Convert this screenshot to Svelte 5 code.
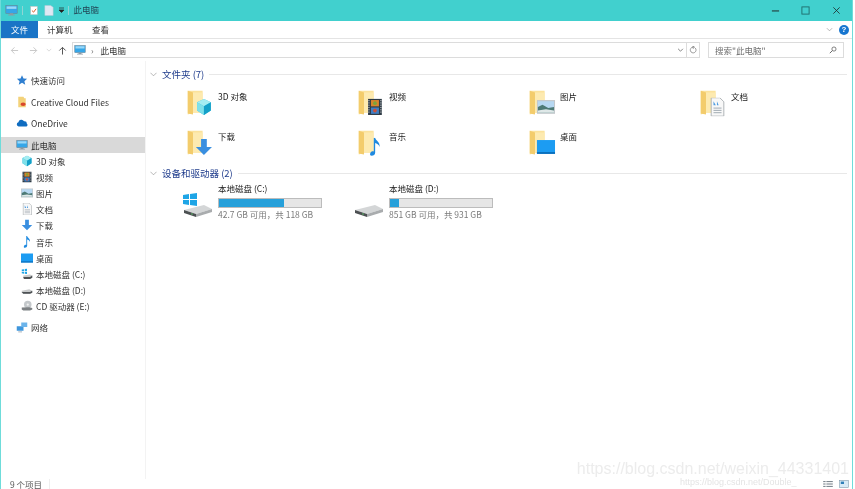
<script>
  // nav tree rows below the top level entries
  const pcChildren = [
    { icon: "cube", label: "3D 对象" },
    { icon: "film", label: "视频" },
    { icon: "photo", label: "图片" },
    { icon: "doc", label: "文档" },
    { icon: "down", label: "下载" },
    { icon: "note", label: "音乐" },
    { icon: "desk", label: "桌面" },
    { icon: "winDrive", label: "本地磁盘 (C:)" },
    { icon: "drive", label: "本地磁盘 (D:)" },
    { icon: "cd", label: "CD 驱动器 (E:)" },
  ];

  const folders = [
    { icon: "cube", label: "3D 对象" },
    { icon: "film", label: "视频" },
    { icon: "photo", label: "图片" },
    { icon: "doc", label: "文档" },
    { icon: "down", label: "下载" },
    { icon: "note", label: "音乐" },
    { icon: "desk", label: "桌面" },
  ];

  const drives = [
    { win: true, label: "本地磁盘 (C:)", used: 64, info: "42.7 GB 可用，共 118 GB" },
    { win: false, label: "本地磁盘 (D:)", used: 9, info: "851 GB 可用，共 931 GB" },
  ];
</script>

{#snippet glyph(name)}
  {#if name === "cube"}
    <path d="M8 1l6 3v7l-6 4-6-4V4z" fill="#3cc0dc" />
    <path d="M8 1l6 3-6 3.5L2 4z" fill="#a5edf2" />
    <path d="M2 4l6 3.5V15l-6-4z" fill="#7fe0ea" />
    <path d="M14 4v7l-6 4V7.500z" fill="#14a0c8" />
  {:else if name === "film"}
    <rect x="2" y="1" width="12" height="14" fill="#2d3a45" />
    <path d="M2.800 2v12M13.200 2v12" stroke="#e8e8e8" stroke-width=".8" stroke-dasharray="1 1" />
    <rect x="4.500" y="2" width="7" height="5.500" fill="#d8842c" />
    <rect x="4.500" y="8.500" width="7" height="5.500" fill="#3f7fc4" />
    <circle cx="8" cy="4.700" r="1.600" fill="#7ba53a" />
    <circle cx="8" cy="11.200" r="1.600" fill="#c9503c" />
  {:else if name === "photo"}
    <rect x="0" y="2" width="16" height="12" fill="#c3c8cc" />
    <rect x="1" y="3" width="14" height="10" fill="#b7d8f2" />
    <path d="M1 8l4-2 5 3 5-1v5H1z" fill="#4d7a76" />
    <path d="M1 11l7-1 7 1v2H1z" fill="#dfe8e8" />
  {:else if name === "doc"}
    <path d="M3 0h7.500L14 3.500V16H3z" fill="#f8f8f8" stroke="#a9aeb2" stroke-width=".8" />
    <path d="M5 3l2 3.500H5zM8 3l1.500 3.500H8z" fill="#4d9be0" />
    <path d="M5 9h7M5 11h7M5 13h7" stroke="#9aa5ad" stroke-width=".8" />
  {:else if name === "down"}
    <path d="M5.500 1h5v7H15l-7 7-7-7h4.500z" fill="#3a8fe0" />
  {:else if name === "note"}
    <path d="M7 0h1.200c.3 2.500 4.500 3.500 3.800 8-.5-2-2.500-3.200-3.800-3.400V13c0 1.500-1.500 2.700-3 2.700S3.500 14.500 4 13.300 5.800 11.500 7 12z" fill="#1f8ae0" />
  {:else if name === "desk"}
    <rect x="0" y="2" width="16" height="12" fill="#1c9cf2" />
    <rect x="0" y="12.500" width="16" height="1.500" fill="#0a6cb8" />
  {:else if name === "winDrive"}
    <path d="M1 2l3-.5V4H1zM5 1.300L8 1v3H5zM1 5h3v2.500L1 7zM5 5h3v3l-3-.4z" fill="#1ea5e6" />
    <path d="M3 10l9-1.500 3 1.500v3l-3 1.500H4l-1-1.500z" fill="#c8cacb" />
    <path d="M3 12l9 0 3-2v3l-3 1.500H4z" fill="#4e5254" />
  {:else if name === "drive"}
    <path d="M1 9l10-2 4 2v2.500l-3 1.500H3l-2-1.500z" fill="#c8cacb" />
    <path d="M1 10.500h11l3-1.500v2.500L12 13H3z" fill="#4e5254" />
  {:else if name === "cd"}
    <circle cx="9" cy="6" r="5" fill="#c4c8cb" />
    <circle cx="9" cy="6" r="1.500" fill="#f2f2f2" />
    <path d="M1 10l10-.5 4 1v2L12 14H3l-2-1.500z" fill="#7d8184" />
  {/if}
{/snippet}

{#snippet icon(name)}
  <svg class="nav-glyph" viewBox="0 0 16 16">{@render glyph(name)}</svg>
{/snippet}

{#snippet monitor(cls)}
  <svg class={cls} viewBox="0 0 16 16">
    <rect x="1" y="2" width="14" height="9.500" fill="#35a6e8" stroke="#6b8191" stroke-width=".7" />
    <rect x="2" y="3" width="12" height="3" fill="#9ad8f8" />
    <path d="M6 11.500h4v1.500h2v1H4v-1h2z" fill="#8d9aa4" />
  </svg>
{/snippet}

<div class="window">
  <header class="titlebar">
    {@render monitor("title-pc")}
    <i class="sep"></i>
    <svg class="qa" viewBox="0 0 12 12">
      <rect x="2" y="1" width="8" height="10" fill="#fff" stroke="#bbb" stroke-width=".6" />
      <path d="M3.500 6l2 2 3-4" fill="none" stroke="#d8602c" stroke-width="1.200" />
    </svg>
    <svg class="qa" viewBox="0 0 12 12">
      <path d="M1 0h7l3 2v10H1z" fill="#dfe8f4" stroke="#b8c4d2" stroke-width=".5" />
    </svg>
    <svg class="caret" viewBox="0 0 7 7">
      <path d="M1 1h5M1 3l2.500 2.500L6 3z" fill="#222" stroke="#222" stroke-width=".7" />
    </svg>
    <i class="sep"></i>
    <span class="title-text">此电脑</span>
    <div class="controls">
      <svg viewBox="0 0 10 10"><path d="M1 5.500h8" stroke="#1f2a2a" stroke-width="1.100" /></svg>
      <svg viewBox="0 0 10 10"><rect x="1" y="1" width="8" height="8" fill="none" stroke="#1f6a6a" stroke-width="1" /></svg>
      <svg viewBox="0 0 10 10"><path d="M1.500 1.500l7 7M8.500 1.500l-7 7" stroke="#1f2a2a" stroke-width=".9" /></svg>
    </div>
  </header>

  <nav class="ribbon">
    <span class="tab tab-file">文件</span>
    <span class="tab">计算机</span>
    <span class="tab">查看</span>
    <svg class="rib-chev" viewBox="0 0 8 5"><path d="M1 1l3 3 3-3" fill="none" stroke="#999" stroke-width=".8" /></svg>
    <span class="help">?</span>
  </nav>

  <div class="addr-row">
    <svg class="nav-arrow dim" viewBox="0 0 10 10"><path d="M9 5H1.500M5 1.500L1.500 5 5 8.500" fill="none" stroke="#c4c4c4" /></svg>
    <svg class="nav-arrow dim" viewBox="0 0 10 10"><path d="M1 5h7.500M5 1.500L8.500 5 5 8.500" fill="none" stroke="#c4c4c4" /></svg>
    <svg class="nav-mini" viewBox="0 0 8 5"><path d="M1 1l3 3 3-3" fill="none" stroke="#c4c4c4" stroke-width=".8" /></svg>
    <svg class="nav-arrow" viewBox="0 0 10 10"><path d="M5 9.500V1.500M1.500 5L5 1.500 8.500 5" fill="none" stroke="#555" stroke-width="1.100" /></svg>
    <div class="addr">
      {@render monitor("addr-pc")}
      <span class="crumb-sep">›</span>
      <span class="crumb">此电脑</span>
      <span class="addr-tail">
        <svg viewBox="0 0 8 5"><path d="M1 1l3 3 3-3" fill="none" stroke="#555" stroke-width=".9" /></svg>
      </span>
      <span class="addr-refresh">
        <svg viewBox="0 0 10 10"><path d="M7.800 2.500A3.600 3.600 0 1 1 5 1.400M5 0v3l2-1.500z" fill="none" stroke="#666" stroke-width=".8" /></svg>
      </span>
    </div>
    <div class="search">
      <span>搜索"此电脑"</span>
      <svg viewBox="0 0 10 10"><circle cx="6.200" cy="3.800" r="2.600" fill="none" stroke="#555" stroke-width=".9" /><path d="M4.300 5.700L1 9" stroke="#555" stroke-width="1.100" /></svg>
    </div>
  </div>

  <div class="body">
    <aside class="sidebar">
      <div class="top-row first">
        <svg class="nav-glyph" viewBox="0 0 16 16"><path d="M8 1.500l2 4.500 4.800.4-3.600 3.200 1.100 4.700L8 11.800l-4.300 2.500 1.100-4.700L1.200 6.400 6 6z" fill="#2f7fd0" /></svg>
        <span>快速访问</span>
      </div>
      <div class="top-row cc">
        <svg class="nav-glyph" viewBox="0 0 16 16">
          <path d="M3 1h7l1 2h2v12H3z" fill="#f3d27a" />
          <ellipse cx="9.500" cy="11" rx="3.500" ry="2.200" fill="#d9482c" />
        </svg>
        <span>Creative Cloud Files</span>
      </div>
      <div class="top-row od">
        <svg class="nav-glyph" viewBox="0 0 16 16"><path d="M3.500 12.500a2.800 2.800 0 0 1-.3-5.500 4 4 0 0 1 7.500-1.200 3.300 3.300 0 0 1 3.800 3.200A2 2 0 0 1 14 12.500z" fill="#0f6cc0" /></svg>
        <span>OneDrive</span>
      </div>
      <div class="top-row pc">
        {@render monitor("nav-glyph")}
        <span>此电脑</span>
      </div>
      {#each pcChildren as row}
        <div class="child-row">
          {@render icon(row.icon)}
          <span>{row.label}</span>
        </div>
      {/each}
      <div class="top-row net">
        <svg class="nav-glyph" viewBox="0 0 16 16">
          <rect x="1" y="7" width="9" height="6" fill="#3f96dc" />
          <rect x="7" y="2" width="8" height="6" fill="#6cb4ea" />
          <path d="M3 14.500h5" stroke="#8d9aa4" />
        </svg>
        <span>网络</span>
      </div>
    </aside>

    <main class="content">
      <div class="group-head">
        <svg viewBox="0 0 8 5"><path d="M.5.500L4 4 7.500.500" fill="none" stroke="#8a8a8a" stroke-width=".7" /></svg>
        <span>文件夹 (7)</span>
        <i></i>
      </div>
      <div class="folder-grid">
        {#each folders as f}
          <div class="folder">
            <svg class="folder-icon" viewBox="0 0 32 32">
              <path d="M2 2h17v25H8l-6 2z" fill="#fbe29c" />
              <path d="M2 2l6 2v25l-6-1z" fill="#f3cc6c" />
              <path d="M8 4h11v23H8z" fill="#fdeab0" />
              <svg x="10" y="10" width="21" height="21" viewBox="0 0 16 16">{@render glyph(f.icon)}</svg>
            </svg>
            <span>{f.label}</span>
          </div>
        {/each}
      </div>

      <div class="group-head second">
        <svg viewBox="0 0 8 5"><path d="M.5.500L4 4 7.500.500" fill="none" stroke="#8a8a8a" stroke-width=".7" /></svg>
        <span>设备和驱动器 (2)</span>
        <i></i>
      </div>
      <div class="drive-row">
        {#each drives as d}
          <div class="drive">
            <svg class="drive-icon" viewBox="0 0 30 24">
              {#if d.win}
                <path d="M0 2l6-1v5H0zM7 1l7-1v6H7zM0 7h6v5l-6-1zM7 7h7v6l-7-1z" fill="#1ea5e6" />
              {/if}
              <path d="M1 17l20-5 8 4-16 5z" fill="#d4d6d7" />
              <path d="M1 17l12 4v3L1 20z" fill="#4c5052" />
              <path d="M13 21l16-5v3l-16 5z" fill="#a9acae" />
              <circle cx="9" cy="21" r=".8" fill="#5ec46a" />
            </svg>
            <div class="drive-text">
              <div class="drive-name">{d.label}</div>
              <div class="bar"><div class="fill" style="width: {d.used}%"></div></div>
              <div class="drive-info">{d.info}</div>
            </div>
          </div>
        {/each}
      </div>
    </main>
  </div>

  <footer class="status">
    <span>9 个项目</span>
    <i></i>
    <div class="views">
      <svg viewBox="0 0 12 10"><path d="M0 2h3M4 2h8M0 5h3M4 5h8M0 8h3M4 8h8" stroke="#6b7680" stroke-width="1.200" /></svg>
      <svg class="view-on" viewBox="0 0 12 10"><rect x=".5" y=".5" width="11" height="9" fill="#d8eaf6" stroke="#7d97aa" stroke-width=".7" /><rect x="2" y="2" width="4" height="3" fill="#2f7fb8" /></svg>
    </div>
  </footer>

  <div class="mark-big">https://blog.csdn.net/weixin_44331401</div>
  <div class="mark-small">https://blog.csdn.net/Double_</div>
</div>

<style>
  :global(body) {
    margin: 0;
    background: #fff;
  }

  .window {
    position: relative;
    width: 853px;
    height: 489px;
    box-sizing: border-box;
    display: flex;
    flex-direction: column;
    border-left: 1.500px solid #6fdcda;
    border-right: 1.500px solid #6fdcda;
    background: #fff;
    overflow: hidden;
    font-family: "Noto Sans CJK SC", "Open Sans", sans-serif;
    font-size: 8.500px;
    color: #333;
    filter: blur(0.3px);
  }

  .titlebar {
    height: 21px;
    flex: none;
    display: flex;
    align-items: center;
    background: #41d0ce;
    margin: 0 -1.500px;
    padding-left: 5px;
    color: #245;
  }

  .title-pc {
    width: 13px;
    height: 13px;
  }

  .sep {
    width: 1px;
    height: 9px;
    margin: 0 6px 0 4px;
    background: #8fd5d4;
  }

  .qa {
    width: 10px;
    height: 11px;
    margin-right: 5px;
  }

  .caret {
    width: 7px;
    height: 7px;
    margin-left: -1px;
  }

  .caret + .sep {
    margin-left: 3px;
    margin-right: 5px;
  }

  .title-text {
    font-size: 8.500px;
    padding-bottom: 3px;
  }

  .controls {
    margin-left: auto;
    display: flex;
    align-items: center;
    padding-right: 13px;
  }

  .controls svg {
    width: 9px;
    height: 9px;
  }

  .controls svg + svg {
    margin-left: 21.500px;
  }

  .ribbon {
    height: 17px;
    flex: none;
    display: flex;
    align-items: center;
    border-bottom: 1px solid #e4e4e4;
    padding-right: 3px;
  }

  .tab {
    padding: 0 9.500px;
    line-height: 17px;
  }

  .tab-file {
    width: 37px;
    box-sizing: border-box;
    text-align: center;
    padding: 0;
    background: #1a74c6;
    color: #fff;
  }

  .tab:nth-child(2) {
    padding-left: 9px;
  }

  .tab:nth-child(3) {
    padding-left: 10px;
  }

  .rib-chev {
    width: 7px;
    height: 5px;
    margin-left: auto;
    margin-right: 6px;
  }

  .help {
    width: 10px;
    height: 10px;
    border-radius: 50%;
    background: #1776d0;
    color: #fff;
    font: bold 8px/10px "Liberation Sans", sans-serif;
    text-align: center;
  }

  .addr-row {
    height: 22px;
    flex: none;
    display: flex;
    align-items: center;
    padding-left: 9px;
    padding-right: 8px;
  }

  .nav-arrow {
    width: 9px;
    height: 9px;
    margin-right: 10px;
  }

  .nav-mini {
    width: 6px;
    height: 4px;
    margin-right: 6px;
    margin-left: -2px;
  }

  .nav-arrow:nth-child(4) {
    margin-right: 5px;
  }

  .addr {
    flex: 1;
    height: 16px;
    box-sizing: border-box;
    display: flex;
    align-items: center;
    border: 1px solid #dcdcdc;
    padding-left: 1px;
  }

  .addr-pc {
    width: 12px;
    height: 12px;
  }

  .crumb-sep {
    margin: 0 5px;
    color: #666;
  }

  .crumb {
    margin-left: 2px;
  }

  .addr-tail {
    margin-left: auto;
    display: flex;
    padding-right: 2px;
  }

  .addr-tail svg {
    width: 7px;
    height: 4px;
  }

  .addr-refresh {
    display: flex;
    align-items: center;
    justify-content: center;
    width: 12px;
    height: 100%;
    border-left: 1px solid #dcdcdc;
  }

  .addr-refresh svg {
    width: 8px;
    height: 8px;
  }

  .search {
    width: 136px;
    height: 16px;
    box-sizing: border-box;
    margin-left: 8px;
    display: flex;
    align-items: center;
    justify-content: space-between;
    border: 1px solid #dcdcdc;
    padding: 0 6px;
    color: #6e6e6e;
  }

  .search svg {
    width: 8px;
    height: 8px;
  }

  .body {
    flex: 1;
    min-height: 0;
    display: flex;
  }

  .sidebar {
    width: 145px;
    flex: none;
    box-sizing: border-box;
    border-right: 1px solid #f3f3f3;
    padding-top: 11px;
  }

  .top-row,
  .child-row {
    display: flex;
    align-items: center;
    height: 16px;
    white-space: nowrap;
  }

  .top-row {
    padding-left: 15px;
    gap: 3px;
    margin-top: 5.500px;
  }

  .top-row.first {
    margin-top: 0;
  }

  .top-row.pc {
    height: 16.500px;
    background: #d9d9d9;
  }

  .top-row.net {
    margin-top: 5.500px;
  }

  .child-row {
    padding-left: 20px;
    gap: 3px;
    height: 16.100px;
  }

  .nav-glyph {
    width: 12px;
    height: 12px;
    flex: none;
  }

  .content {
    flex: 1;
    min-width: 0;
    padding-left: 4px;
  }

  .group-head {
    display: flex;
    align-items: center;
    height: 14px;
    margin-top: 6px;
    color: #1f3c8c;
    font-size: 9.500px;
    gap: 5px;
  }

  .group-head svg {
    width: 7px;
    height: 5px;
    flex: none;
  }

  .group-head i {
    flex: 1;
    height: 1px;
    background: #e8e8e8;
    margin-right: 5px;
  }

  .group-head.second {
    margin-top: -2px;
  }

  .folder-grid {
    display: grid;
    grid-template-columns: repeat(4, 171px);
    grid-auto-rows: 40px;
    padding-left: 36px;
    margin-top: 7px;
  }

  .folder {
    display: flex;
    align-items: flex-start;
    gap: 4px;
  }

  .folder span {
    line-height: 17px;
    color: #222;
  }

  .folder-icon {
    width: 28px;
    height: 30px;
    flex: none;
  }

  .drive-row {
    display: flex;
    padding-left: 33px;
    margin-top: 2px;
  }

  .drive {
    width: 171px;
    display: flex;
    gap: 5px;
  }

  .drive-icon {
    width: 30px;
    height: 24px;
    margin-top: 11px;
    flex: none;
  }

  .drive-name {
    line-height: 12px;
    padding-bottom: 4px;
    color: #222;
  }

  .drive-info {
    color: #7a7a7a;
    line-height: 13px;
    white-space: nowrap;
  }

  .bar {
    width: 104px;
    height: 10px;
    box-sizing: border-box;
    background: #e6e6e6;
    border: 1px solid #bcbcbc;
  }

  .fill {
    height: 100%;
    background: #26a0da;
  }

  .status {
    height: 10px;
    flex: none;
    display: flex;
    align-items: center;
    padding-left: 9px;
    color: #555;
  }

  .status i {
    width: 1px;
    height: 10px;
    margin-left: 7px;
    background: #eee;
  }

  .views {
    margin-left: auto;
    display: flex;
    gap: 6px;
    padding-right: 3px;
  }

  .views svg {
    width: 10px;
    height: 8px;
  }

  .mark-big {
    position: absolute;
    right: 3px;
    top: 460px;
    font: 16px/17px "Liberation Sans", sans-serif;
    color: #ececec;
    white-space: nowrap;
  }

  .mark-small {
    position: absolute;
    left: 679px;
    top: 477px;
    font: 9px/11px "Liberation Sans", sans-serif;
    color: #e4e4e4;
    white-space: nowrap;
  }
</style>
